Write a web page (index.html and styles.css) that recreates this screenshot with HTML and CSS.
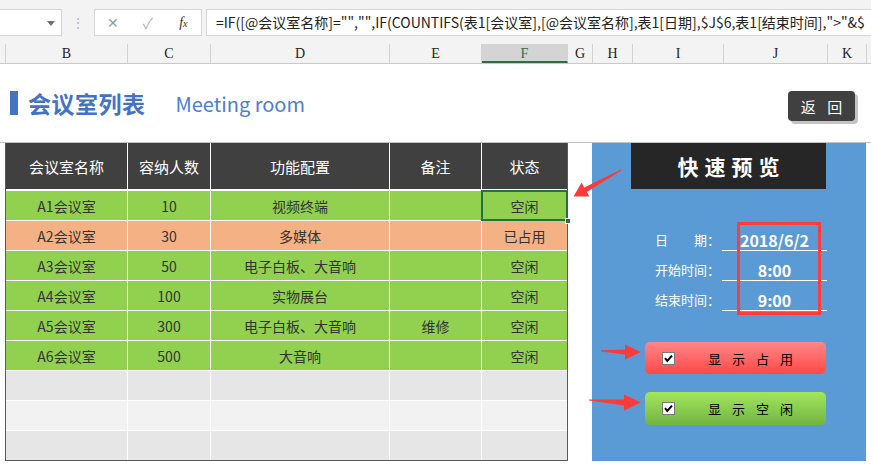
FILE: index.html
```html
<!DOCTYPE html>
<html lang="zh-CN">
<head>
    <meta charset="UTF-8">
    <title>会议室列表</title>
    <link rel="stylesheet" href="styles.css">
</head>
<body>

    <!-- Formula bar -->
    <div class="formula-bar">
        <div class="name-box"><span class="caret"></span></div>
        <div class="grip">⋮</div>
        <div class="fx-buttons">
            <span class="btn-x">✕</span>
            <span class="btn-ok">✓</span>
            <span class="btn-fx"><i>f</i><small>x</small></span>
        </div>
        <div class="formula">=IF([@会议室名称]="","",IF(COUNTIFS(表1[会议室],[@会议室名称],表1[日期],$J$6,表1[结束时间],"&gt;"&amp;$</div>
    </div>

    <!-- Column letters -->
    <div class="col-heads">
        <div class="ch col-a"></div>
        <div class="ch col-b">B</div>
        <div class="ch col-c">C</div>
        <div class="ch col-d">D</div>
        <div class="ch col-e">E</div>
        <div class="ch col-f active">F</div>
        <div class="ch col-g">G</div>
        <div class="ch col-h">H</div>
        <div class="ch col-i">I</div>
        <div class="ch col-j">J</div>
        <div class="ch col-k">K</div>
        <div class="ch col-l"></div>
    </div>

    <div class="sheet">
        <!-- Title -->
        <div class="title-row">
            <span class="title-bar"></span>
            <h1>会议室列表</h1>
            <span class="title-en">Meeting room</span>
            <button class="back-btn">返 回</button>
        </div>

        <div class="main">
            <!-- Room list -->
            <div class="table-wrap">
                <div class="grid" id="grid">
                    <div class="hd">会议室名称</div>
                    <div class="hd">容纳人数</div>
                    <div class="hd">功能配置</div>
                    <div class="hd">备注</div>
                    <div class="hd">状态</div>
                </div>
                <div class="selection"><span class="handle"></span></div>
            </div>

            <div class="gap"></div>

            <!-- Quick preview -->
            <div class="panel">
                <div class="preview-title">快速预览</div>

                <div class="fields">
                    <div class="field">
                        <span class="label">日　　期：</span>
                        <span class="value">2018/6/2</span>
                    </div>
                    <div class="field">
                        <span class="label">开始时间：</span>
                        <span class="value">8:00</span>
                    </div>
                    <div class="field">
                        <span class="label">结束时间：</span>
                        <span class="value">9:00</span>
                    </div>
                </div>
                <div class="mark-box"></div>

                <div class="toggle busy">
                    <svg class="check" width="13" height="13" viewBox="0 0 13 13"><rect x="0.5" y="0.5" width="12" height="12" fill="#fff" stroke="#7a7a7a"/><path d="M3 6.2 L5.3 9 L10 3.6" fill="none" stroke="#000" stroke-width="2"/></svg>
                    <span>显示占用</span>
                </div>
                <div class="toggle free">
                    <svg class="check" width="13" height="13" viewBox="0 0 13 13"><rect x="0.5" y="0.5" width="12" height="12" fill="#fff" stroke="#7a7a7a"/><path d="M3 6.2 L5.3 9 L10 3.6" fill="none" stroke="#000" stroke-width="2"/></svg>
                    <span>显示空闲</span>
                </div>
            </div>
        </div>
    </div>

    <!-- Red callout arrows -->
    <svg class="arrows" width="871" height="466" viewBox="0 0 871 466">
        <polygon points="620.8,169.4 584.2,187.6 581.6,182.6 573.5,196.6 589.4,196.6 586.8,192.0 621.4,170.6"/>
        <polygon points="601,350.3 625,349.4 625,344.8 641,352 625,359.4 625,354.6 601,351.5"/>
        <polygon points="589,399.4 624,399.4 624,394.4 641,402.6 624,410.6 624,405.4 589,400.6"/>
    </svg>

    <script>
        const rooms = [
            ['A1会议室', '10', '视频终端', '', '空闲'],
            ['A2会议室', '30', '多媒体', '', '已占用'],
            ['A3会议室', '50', '电子白板、大音响', '', '空闲'],
            ['A4会议室', '100', '实物展台', '', '空闲'],
            ['A5会议室', '300', '电子白板、大音响', '维修', '空闲'],
            ['A6会议室', '500', '大音响', '', '空闲'],
            ['', '', '', '', ''],
            ['', '', '', '', ''],
            ['', '', '', '', '']
        ];

        const grid = document.getElementById('grid');
        rooms.forEach(function (row, r) {
            let cls = 'empty';
            if (row[4] === '空闲') cls = 'free';
            else if (row[4] === '已占用') cls = 'busy';
            else if (r % 2 === 1) cls = 'empty alt';
            if (r === rooms.length - 1) cls += ' last';
            row.forEach(function (text) {
                const cell = document.createElement('div');
                cell.className = 'cell ' + cls;
                cell.textContent = text;
                grid.appendChild(cell);
            });
        });
    </script>
</body>
</html>
```

FILE: styles.css
```css
* {
    margin: 0;
    padding: 0;
    box-sizing: border-box;
}

body {
    width: 871px;
    height: 466px;
    overflow: hidden;
    position: relative;
    background-color: #ffffff;
    font-family: "Noto Sans CJK SC", "Noto Sans", sans-serif;
    color: #333333;
}

/* Formula bar */
.formula-bar {
    height: 44px;
    padding-top: 9px;
    display: flex;
    align-items: flex-start;
    background-color: #f3f3f3;
}

.name-box {
    position: relative;
    width: 62px;
    height: 27px;
    background-color: #ffffff;
    border: 1px solid #d6d6d6;
    border-left: none;
}

.caret {
    position: absolute;
    right: 6px;
    top: 11px;
    border-left: 4px solid transparent;
    border-right: 4px solid transparent;
    border-top: 5px solid #707070;
}

.grip {
    width: 32px;
    line-height: 27px;
    text-align: center;
    font-size: 14px;
    color: #b8b8b8;
}

.fx-buttons {
    width: 108px;
    height: 27px;
    display: flex;
    align-items: center;
    background-color: #ffffff;
    border: 1px solid #d6d6d6;
}

.fx-buttons span {
    width: 36px;
    text-align: center;
    line-height: 25px;
}

.btn-x {
    font-size: 14px;
    color: #9a9a9a;
}

.btn-ok {
    font-size: 15px;
    color: #b4b4b4;
}

.btn-fx {
    font-family: "Liberation Serif", serif;
    color: #333333;
    font-size: 14px;
}

.btn-fx small {
    font-size: 10px;
    font-style: italic;
}

.formula {
    flex: 1;
    height: 27px;
    margin-left: 4px;
    padding-left: 9px;
    background-color: #ffffff;
    border: 1px solid #d6d6d6;
    border-right: none;
    font-size: 14px;
    line-height: 25px;
    color: #222222;
    white-space: nowrap;
    overflow: hidden;
}

/* Column letters */
.col-heads {
    display: flex;
    height: 20px;
    background-color: #f3f3f3;
    border-bottom: 1px solid #c9c9c9;
}

.ch {
    flex: none;
    border-right: 1px solid #d2d2d2;
    text-align: center;
    font-family: "Liberation Serif", serif;
    font-size: 14px;
    line-height: 19px;
    color: #222222;
}

.col-a { width: 6px; }
.col-b { width: 122px; }
.col-c { width: 83px; }
.col-d { width: 179px; }
.col-e { width: 92px; }
.col-f { width: 86px; }
.col-g { width: 25px; }
.col-h { width: 40px; }
.col-i { width: 91px; }
.col-j { width: 104px; }
.col-k { width: 39px; }
.col-l { flex: 1; border-right: none; }

.ch.active {
    background-color: #d4d4d4;
    border-bottom: 2px solid #217346;
    color: #217346;
}

/* Title */
.title-row {
    height: 79px;
    display: flex;
    align-items: center;
    padding-left: 10px;
    border-bottom: 1px solid #c4c4c4;
}

.title-bar {
    width: 8px;
    height: 24px;
    background-color: #4472c4;
}

h1 {
    margin-left: 10px;
    font-size: 23px;
    font-weight: bold;
    color: #4472c4;
    letter-spacing: 0.5px;
}

.title-en {
    margin-left: 30px;
    font-size: 20px;
    color: #4a7fd2;
}

.back-btn {
    margin-left: auto;
    margin-right: 16px;
    margin-top: 6px;
    width: 67px;
    height: 30px;
    border: none;
    border-radius: 4px;
    background-color: #404040;
    box-shadow: 3px 3px 0 #c4c4c4;
    color: #ffffff;
    font-family: "Noto Sans CJK SC", sans-serif;
    font-size: 15px;
    letter-spacing: 4px;
    padding-left: 4px;
}

/* Main area */
.main {
    display: flex;
    height: 323px;
}

.table-wrap {
    position: relative;
    margin-left: 5px;
    align-self: flex-start;
    border-left: 1px solid #5a5a5a;
    border-right: 1px solid #5a5a5a;
    border-bottom: 1px solid #5a5a5a;
}

.grid {
    display: grid;
    grid-template-columns: 122px 83px 179px 92px 85px;
}

.grid > div {
    height: 30px;
    display: flex;
    align-items: center;
    justify-content: center;
    border-right: 1px solid #ffffff;
    border-bottom: 1px solid #ffffff;
    font-size: 14px;
    color: #333333;
}

.grid > div:nth-child(5n) {
    border-right: none;
}

.grid > .hd {
    height: 48px;
    border-bottom-width: 2px;
    background-color: #404040;
    color: #ffffff;
    font-size: 15px;
}

.cell.free { background-color: #92d050; }
.cell.busy { background-color: #f4b183; }
.cell.empty { background-color: #e6e6e6; }
.cell.empty.alt { background-color: #f2f2f2; }

.grid > .cell.last {
    height: 29px;
    border-bottom: none;
}

/* Selected cell F of first row */
.selection {
    position: absolute;
    left: 475px;
    top: 47px;
    width: 87px;
    height: 31px;
    border: 2px solid #217346;
}

.handle {
    position: absolute;
    right: -5px;
    bottom: -5px;
    width: 6px;
    height: 6px;
    background-color: #217346;
    border: 1px solid #ffffff;
}

.gap {
    width: 24px;
}

/* Quick preview panel */
.panel {
    position: relative;
    width: 274px;
    height: 318px;
    background-color: #5b9bd5;
}

.preview-title {
    margin-left: 39px;
    width: 195px;
    height: 46px;
    background-color: #262626;
    color: #ffffff;
    font-size: 21px;
    font-weight: bold;
    letter-spacing: 6px;
    padding-left: 6px;
    text-align: center;
    line-height: 46px;
}

.fields {
    margin-top: 32px;
    margin-left: 63px;
}

.field {
    display: flex;
    height: 30px;
}

.label {
    width: 65px;
    padding-top: 9px;
    line-height: 20px;
    font-size: 13px;
    color: #ffffff;
}

.value {
    margin-left: 2px;
    width: 105px;
    padding-top: 9px;
    line-height: 20px;
    border-bottom: 1px solid #ffffff;
    text-align: center;
    font-size: 16px;
    font-weight: bold;
    color: #ffffff;
}

.mark-box {
    position: absolute;
    left: 145px;
    top: 79px;
    width: 84px;
    height: 93px;
    border: 3px solid #ff3b3b;
}

.toggle {
    margin-left: 53px;
    width: 181px;
    height: 32px;
    display: flex;
    align-items: center;
    padding-left: 17px;
    border-radius: 5px;
    font-size: 13px;
    color: #000000;
}

.toggle span {
    margin-left: 33px;
    letter-spacing: 11px;
}

.toggle.busy {
    margin-top: 31px;
    background: linear-gradient(#ff8787, #ff4848);
}

.toggle.free {
    margin-top: 18px;
    height: 33px;
    background: linear-gradient(#a2e65c, #73b443);
}

.check {
    flex: none;
}

/* Annotation arrows */
.arrows {
    position: absolute;
    top: 0;
    left: 0;
    pointer-events: none;
}

.arrows polygon {
    fill: #fb3a3a;
}
```
